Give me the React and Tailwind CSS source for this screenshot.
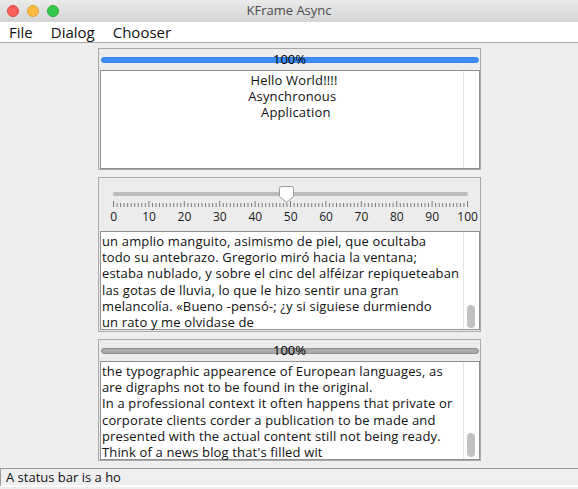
import React from "react";

const font = { fontFamily: '"Open Sans", "Noto Sans", sans-serif' };

function ScrollCol({ thumbTop, thumbH }) {
  return (
    <div className="relative w-[16px] shrink-0 border-l border-[#e4e4e4] bg-white">
      {thumbH ? (
        <div
          className="absolute left-[3px] w-[8px] rounded-full bg-[#c1c1c1]"
          style={{ top: thumbTop, height: thumbH }}
        />
      ) : null}
    </div>
  );
}

function TextArea({ lines, height, thumbTop, thumbH, center, pt }) {
  return (
    <div
      className="ml-[1px] flex border border-[#8f8f8f] bg-white"
      style={{ height }}
    >
      <div
        className={
          "min-w-0 flex-1 text-[13px] leading-[16.2px] tracking-[0.15px] text-[#111] " +
          (center ? "pl-[24px] text-center" : "pl-[1px]")
        }
        style={{ paddingTop: pt }}
      >
        {lines.map((l, i) => (
          <div key={i} className="whitespace-pre">
            {l}
          </div>
        ))}
      </div>
      <ScrollCol thumbTop={thumbTop} thumbH={thumbH} />
    </div>
  );
}

function Progress({ blue }) {
  return (
    <div className="relative h-[21px]">
      <div
        className={
          "absolute left-[2px] right-[1px] top-[8px] h-[6px] rounded-full " +
          (blue
            ? "bg-[#3d8ef4] border border-[#3a86ea]"
            : "bg-[#ababab] border border-[#8f8f8f]")
        }
      />
      <div className="absolute inset-x-0 top-[2px] text-center text-[13px] leading-[16px] text-black">
        100%
      </div>
    </div>
  );
}

function Slider() {
  const ticks = [];
  for (let i = 0; i <= 100; i++) {
    const x = 14.5 + i * 3.54;
    const major = i % 10 === 0;
    ticks.push(
      <line
        key={i}
        x1={x}
        x2={x}
        y1={major ? 23 : 25}
        y2={29}
        stroke="#7a7a7a"
        strokeWidth="1"
      />
    );
  }
  const labels = [0, 10, 20, 30, 40, 50, 60, 70, 80, 90, 100];
  return (
    <div className="h-[53px]">
      <svg width="381" height="31" className="block">
        <rect x="14" y="14" width="355" height="4" rx="2" fill="#bcbcbc" />
        {ticks}
        <path
          d="M180.5 10.5 Q180.5 8.5 182.5 8.5 L192.5 8.5 Q194.5 8.5 194.5 10.5 L194.5 18.5 L187.5 24.5 L180.5 18.5 Z"
          fill="#ffffff"
          stroke="#9a9a9a"
          strokeWidth="1"
        />
      </svg>
      <div className="ml-[-3px] flex text-[12px] leading-[15px] text-[#1a1a1a]">
        {labels.map((l) => (
          <div key={l} className="w-[35.4px] shrink-0 text-center">
            {l}
          </div>
        ))}
      </div>
    </div>
  );
}

function Panel({ children, height }) {
  return (
    <div
      className="ml-[98px] w-[383px] border border-[#a9a9a9] bg-[#ececec]"
      style={{ height }}
    >
      {children}
    </div>
  );
}

export default function App() {
  return (
    <div
      className="flex h-[489px] w-[578px] flex-col overflow-hidden bg-[#eeeeee]"
      style={font}
    >
      {/* title bar */}
      <div className="relative flex h-[22px] shrink-0 items-center bg-gradient-to-b from-[#ebebeb] to-[#d4d4d4]">
        <div className="ml-[7px] flex gap-[8px]">
          <div className="h-[12px] w-[12px] rounded-full border border-[#e0443e] bg-[#fc605b]" />
          <div className="h-[12px] w-[12px] rounded-full border border-[#dea236] bg-[#fdbc40]" />
          <div className="h-[12px] w-[12px] rounded-full border border-[#27aa35] bg-[#34c84a]" />
        </div>
        <div className="absolute inset-x-0 top-[2px] text-center text-[13px] leading-[17px] text-[#4d4d4d]">
          KFrame Async
        </div>
      </div>
      {/* menu bar */}
      <div className="flex h-[21px] shrink-0 items-center border-b border-[#a5a5a5] bg-white pl-[9px] text-[15px] leading-[20px] text-[#111]">
        <span>File</span>
        <span className="ml-[18px]">Dialog</span>
        <span className="ml-[18px]">Chooser</span>
      </div>

      <div className="flex flex-col gap-[7px] pt-[5px]">
        <Panel height={122}>
          <Progress blue />
          <TextArea
            height={99}
            center
            pt={1}
            lines={["Hello World!!!!", "Asynchronous ", " Application"]}
          />
        </Panel>

        <Panel height={155}>
          <Slider />
          <TextArea
            height={99}
            thumbTop={73}
            thumbH={23}
            pt={1}
            lines={[
              "un amplio manguito, asimismo de piel, que ocultaba",
              "todo su antebrazo. Gregorio miró hacia la ventana;",
              "estaba nublado, y sobre el cinc del alféizar repiqueteaban",
              "las gotas de lluvia, lo que le hizo sentir una gran",
              "melancolía. «Bueno -pensó-; ¿y si siguiese durmiendo",
              "un rato y me olvidase de",
            ]}
          />
        </Panel>

        <Panel height={122}>
          <Progress />
          <TextArea
            height={99}
            thumbTop={71}
            thumbH={24}
            pt={1}
            lines={[
              "the typographic appearence of European languages, as",
              "are digraphs not to be found in the original.",
              "In a professional context it often happens that private or",
              "corporate clients corder a publication to be made and",
              "presented with the actual content still not being ready.",
              "Think of a news blog that's filled wit",
            ]}
          />
        </Panel>
      </div>

      {/* status bar */}
      <div className="mt-[7px] h-[19px] shrink-0 border-t border-l border-[#9c9c9c] border-b-2 border-b-white bg-[#efefef] pl-[5px] text-[13px] leading-[17px] text-[#111]">
        A status bar is a ho
      </div>
    </div>
  );
}
